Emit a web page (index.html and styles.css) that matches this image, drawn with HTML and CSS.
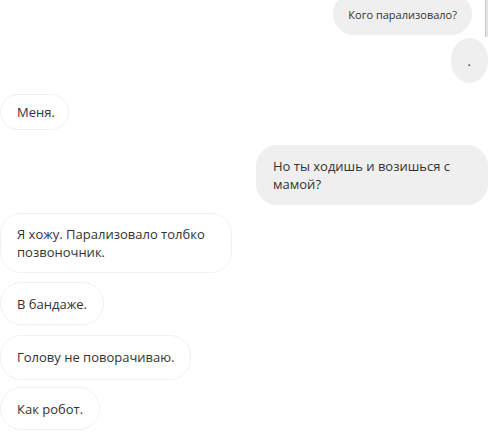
FILE: index.html
```html
<!DOCTYPE html>
<html lang="ru">
<head>
<meta charset="utf-8">
<link rel="stylesheet" href="styles.css">
</head>
<body>
<div class="chat">
  <div class="msg out first">Кого парализовало?</div>
  <div class="msg out dot">.</div>
  <div class="msg in m-menya">Меня.</div>
  <div class="msg out m-no">Но ты ходишь и возишься с мамой?</div>
  <div class="msg in m-ya">Я хожу. Парализовало толбко позвоночник.</div>
  <div class="msg in m-band">В бандаже.</div>
  <div class="msg in m-gol">Голову не поворачиваю.</div>
  <div class="msg in m-kak">Как робот.</div>
  <div class="scrollline"></div>
</div>
</body>
</html>
```
FILE: styles.css
```css
html, body {
  margin: 0;
  padding: 0;
  background: #fff;
  overflow: hidden;
}
body {
  width: 500px;
  height: 440px;
  font-family: "Open Sans", "Noto Sans", sans-serif;
  font-size: 13px;
  color: #333;
}
.chat {
  position: relative;
  display: flex;
  flex-direction: column;
  padding-right: 12px;
}
.msg {
  box-sizing: border-box;
  max-width: 232px;
  padding: 12px 16px 11px;
  line-height: 18px;
  border-radius: 21px;
  border: 1px solid transparent;
}
.out {
  align-self: flex-end;
  background: #efefef;
  border-color: #efefef;
}
.in {
  align-self: flex-start;
  background: #fff;
  border-color: #f1f1f1;
}
.first {
  margin-top: -7px;
  margin-right: 16px;
  height: 42px;
  font-size: 11px;
  padding: 12px 14px;
}
.dot {
  margin-top: 3px;
  height: 45px;
  border-radius: 50%;
  padding-top: 13px;
}
.m-menya {
  margin-top: 11px;
  height: 36px;
  padding: 8px 13px 8px 16px;
  border-radius: 18px;
}
.m-no {
  margin-top: 15px;
  padding: 11px 16px;
}
.m-ya {
  margin-top: 8px;
  padding: 11px 16px;
}
.m-band { margin-top: 9px; }
.m-gol { margin-top: 10px; padding: 12px 16px 13px; }
.m-kak { margin-top: 7px; }
.scrollline {
  position: absolute;
  left: 485px;
  top: 0;
  width: 2px;
  height: 37px;
  background: #e4e4e4;
  border-left: 1px solid #c9c9c9;
}
```
